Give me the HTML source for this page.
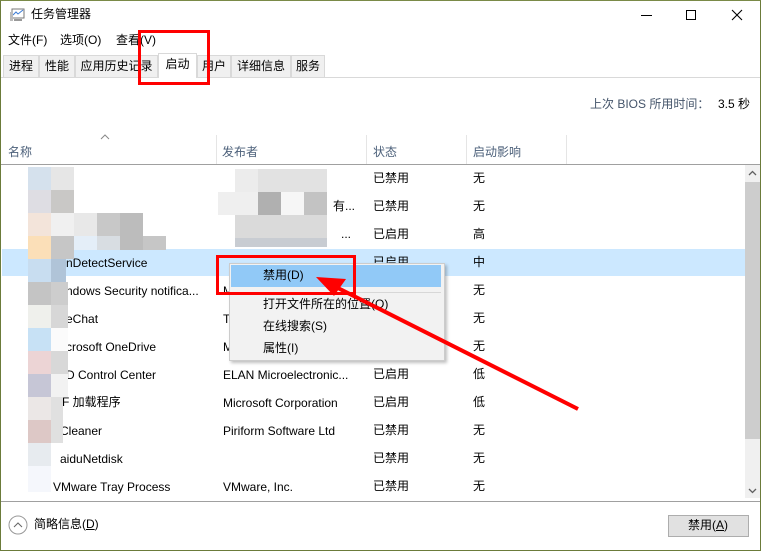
<!DOCTYPE html>
<html><head><meta charset="utf-8"><style>
*{margin:0;padding:0;box-sizing:border-box}
body{width:761px;height:551px;overflow:hidden;background:#fff;font-family:"Liberation Sans","Noto Sans CJK SC",sans-serif;font-size:12px;color:#000;position:relative}
.a{position:absolute;white-space:nowrap}
.c{position:absolute;white-space:nowrap;margin-top:-2px}
.b{position:absolute}
.tab{position:absolute;top:55px;height:22px;background:#f0f0f0;border:1px solid #d9d9d9;border-bottom:none;line-height:21px;text-align:center;font-size:12px}
</style></head><body>
<div class="b" style="left:0;top:0;width:761px;height:551px;border:1px solid #6b7b3a;border-top-color:#7a8a48"></div>
<svg class="b" style="left:9px;top:8px" width="16" height="14"><rect x="3" y="1" width="12" height="9" fill="#fff" stroke="#777"/><polyline points="4,7 7,4 9,6 14,2" fill="none" stroke="#3a7bd5"/><rect x="1" y="4" width="3" height="9" fill="#bbb"/><rect x="5" y="11" width="8" height="2" fill="#999"/></svg>
<div class="c" style="left:31px;top:7px;font-size:12px">任务管理器</div>
<div class="b" style="left:641px;top:15px;width:11px;height:1px;background:#000"></div>
<div class="b" style="left:686px;top:10px;width:10px;height:10px;border:1px solid #000"></div>
<svg class="b" style="left:731px;top:9px" width="12" height="12"><path d="M1 1L11 11M11 1L1 11" stroke="#000" stroke-width="1.1"/></svg>
<div class="c" style="left:8px;top:33px">文件(F)</div>
<div class="c" style="left:60px;top:33px">选项(O)</div>
<div class="c" style="left:116px;top:33px">查看(V)</div>
<div class="b" style="left:1px;top:77px;width:759px;height:1px;background:#d9d9d9"></div>
<div class="tab" style="left:3px;width:36px">进程</div>
<div class="tab" style="left:39px;width:36px">性能</div>
<div class="tab" style="left:75px;width:83px">应用历史记录</div>
<div class="tab" style="left:158px;width:39px;top:53px;height:25px;background:#fff">启动</div>
<div class="tab" style="left:197px;width:34px">用户</div>
<div class="tab" style="left:231px;width:60px">详细信息</div>
<div class="tab" style="left:291px;width:34px">服务</div>
<div class="b" style="left:138px;top:30px;width:72px;height:55px;border:3px solid #f00"></div>
<div class="c" style="left:590px;top:97px;color:#44546a">上次 BIOS 所用时间：</div>
<div class="c" style="left:718px;top:97px">3.5 秒</div>
<svg class="b" style="left:100px;top:134px" width="10" height="6"><path d="M1 5L5 1L9 5" fill="none" stroke="#888"/></svg>
<div class="c" style="left:8px;top:145px;color:#4c607a">名称</div>
<div class="c" style="left:222px;top:145px;color:#4c607a">发布者</div>
<div class="c" style="left:373px;top:145px;color:#4c607a">状态</div>
<div class="c" style="left:473px;top:145px;color:#4c607a">启动影响</div>
<div class="b" style="left:216px;top:135px;width:1px;height:29px;background:#e5e5e5"></div>
<div class="b" style="left:366px;top:135px;width:1px;height:29px;background:#e5e5e5"></div>
<div class="b" style="left:466px;top:135px;width:1px;height:29px;background:#e5e5e5"></div>
<div class="b" style="left:566px;top:135px;width:1px;height:29px;background:#e5e5e5"></div>
<div class="b" style="left:1px;top:164px;width:759px;height:1px;background:#a0a0a0"></div>
<div class="b" style="left:2px;top:249px;width:743px;height:27px;background:#cce8ff"></div>
<div class="c" style="left:373px;top:171px">已禁用</div><div class="c" style="left:473px;top:171px">无</div>
<div class="c" style="left:333px;top:199px">有...</div><div class="c" style="left:373px;top:199px">已禁用</div><div class="c" style="left:473px;top:199px">无</div>
<div class="a" style="left:341px;top:227px">...</div><div class="c" style="left:373px;top:227px">已启用</div><div class="c" style="left:473px;top:227px">高</div>
<div class="a" style="left:66px;top:256px">nDetectService</div><div class="c" style="left:373px;top:255px">已启用</div><div class="c" style="left:473px;top:255px">中</div>
<div class="a" style="left:66px;top:284px">ndows Security notifica...</div><div class="a" style="left:223px;top:284px">M</div><div class="c" style="left:473px;top:283px">无</div>
<div class="a" style="left:66px;top:312px">eChat</div><div class="a" style="left:223px;top:312px">T</div><div class="c" style="left:473px;top:311px">无</div>
<div class="a" style="left:66px;top:340px">crosoft OneDrive</div><div class="a" style="left:223px;top:340px">M</div><div class="c" style="left:473px;top:339px">无</div>
<div class="a" style="left:66px;top:368px">D Control Center</div><div class="a" style="left:223px;top:368px">ELAN Microelectronic...</div><div class="c" style="left:373px;top:367px">已启用</div><div class="c" style="left:473px;top:367px">低</div>
<div class="c" style="left:62px;top:395px">F 加载程序</div><div class="a" style="left:223px;top:396px">Microsoft Corporation</div><div class="c" style="left:373px;top:395px">已启用</div><div class="c" style="left:473px;top:395px">低</div>
<div class="a" style="left:60px;top:424px">Cleaner</div><div class="a" style="left:223px;top:424px">Piriform Software Ltd</div><div class="c" style="left:373px;top:423px">已禁用</div><div class="c" style="left:473px;top:423px">无</div>
<div class="a" style="left:60px;top:452px">aiduNetdisk</div><div class="c" style="left:373px;top:451px">已禁用</div><div class="c" style="left:473px;top:451px">无</div>
<div class="a" style="left:53px;top:480px">VMware Tray Process</div><div class="a" style="left:223px;top:480px">VMware, Inc.</div><div class="c" style="left:373px;top:479px">已禁用</div><div class="c" style="left:473px;top:479px">无</div>
<div class="b" style="left:28px;top:167px;width:23px;height:23px;background:#d5e1ed"></div>
<div class="b" style="left:28px;top:190px;width:23px;height:23px;background:#dedde3"></div>
<div class="b" style="left:28px;top:213px;width:23px;height:23px;background:#f3e4da"></div>
<div class="b" style="left:28px;top:236px;width:23px;height:23px;background:#fbdfb8"></div>
<div class="b" style="left:28px;top:259px;width:23px;height:23px;background:#c8ddf0"></div>
<div class="b" style="left:28px;top:282px;width:23px;height:23px;background:#c4c4c4"></div>
<div class="b" style="left:28px;top:305px;width:23px;height:23px;background:#eff0ec"></div>
<div class="b" style="left:28px;top:328px;width:23px;height:23px;background:#c7e1f5"></div>
<div class="b" style="left:28px;top:351px;width:23px;height:23px;background:#ecd4d5"></div>
<div class="b" style="left:28px;top:374px;width:23px;height:23px;background:#c6c6d6"></div>
<div class="b" style="left:28px;top:397px;width:23px;height:23px;background:#ebe7e6"></div>
<div class="b" style="left:28px;top:420px;width:23px;height:23px;background:#ddc8c6"></div>
<div class="b" style="left:28px;top:443px;width:23px;height:23px;background:#e7ebef"></div>
<div class="b" style="left:28px;top:466px;width:23px;height:26px;background:#f5f7fc"></div>
<div class="b" style="left:51px;top:167px;width:23px;height:23px;background:#e6e6e6"></div>
<div class="b" style="left:51px;top:190px;width:23px;height:23px;background:#c9c8c6"></div>
<div class="b" style="left:51px;top:213px;width:23px;height:23px;background:#f0f0f0"></div>
<div class="b" style="left:51px;top:236px;width:23px;height:23px;background:#c6c6c6"></div>
<div class="b" style="left:51px;top:259px;width:15px;height:23px;background:#b0c4d8"></div>
<div class="b" style="left:51px;top:282px;width:17px;height:23px;background:#cdcdcd"></div>
<div class="b" style="left:51px;top:305px;width:17px;height:23px;background:#d7d7d7"></div>
<div class="b" style="left:51px;top:328px;width:17px;height:23px;background:#fbfbfb"></div>
<div class="b" style="left:51px;top:351px;width:17px;height:23px;background:#d8d8d8"></div>
<div class="b" style="left:51px;top:374px;width:17px;height:23px;background:#f2f2f2"></div>
<div class="b" style="left:51px;top:397px;width:12px;height:23px;background:#e0e0e0"></div>
<div class="b" style="left:51px;top:420px;width:12px;height:23px;background:#e0e0e0"></div>
<div class="b" style="left:74px;top:213px;width:23px;height:23px;background:#e8e8e8"></div>
<div class="b" style="left:97px;top:213px;width:23px;height:23px;background:#c8c8c8"></div>
<div class="b" style="left:120px;top:213px;width:23px;height:37px;background:#bcbcbc"></div>
<div class="b" style="left:74px;top:236px;width:23px;height:14px;background:#e4eef8"></div>
<div class="b" style="left:97px;top:236px;width:23px;height:14px;background:#d8dde2"></div>
<div class="b" style="left:143px;top:236px;width:23px;height:14px;background:#c6c6c6"></div>
<div class="b" style="left:235px;top:169px;width:23px;height:23px;background:#ececec"></div>
<div class="b" style="left:258px;top:169px;width:69px;height:23px;background:#e2e2e2"></div>
<div class="b" style="left:218px;top:192px;width:40px;height:23px;background:#efefef"></div>
<div class="b" style="left:258px;top:192px;width:23px;height:23px;background:#b0b0b0"></div>
<div class="b" style="left:281px;top:192px;width:23px;height:23px;background:#f6f6f6"></div>
<div class="b" style="left:304px;top:192px;width:23px;height:23px;background:#c3c3c3"></div>
<div class="b" style="left:235px;top:215px;width:92px;height:23px;background:#dadada"></div>
<div class="b" style="left:235px;top:238px;width:92px;height:9px;background:#c8ccd2"></div>
<div class="b" style="left:745px;top:165px;width:15px;height:333px;background:#f0f0f0"></div>
<div class="b" style="left:745px;top:182px;width:15px;height:257px;background:#cdcdcd"></div>
<svg class="b" style="left:748px;top:170px" width="9" height="6"><path d="M1 5L4.5 1.5L8 5" fill="none" stroke="#606060" stroke-width="1.3"/></svg>
<svg class="b" style="left:748px;top:488px" width="9" height="6"><path d="M1 1L4.5 4.5L8 1" fill="none" stroke="#606060" stroke-width="1.3"/></svg>
<div class="b" style="left:1px;top:501px;width:759px;height:1px;background:#a0a0a0"></div>
<svg class="b" style="left:8px;top:515px" width="20" height="20"><circle cx="10" cy="10" r="9" fill="#fff" stroke="#999"/><path d="M6 12L10 8L14 12" fill="none" stroke="#666"/></svg>
<div class="c" style="left:34px;top:517px">简略信息(<u>D</u>)</div>
<div class="b" style="left:668px;top:515px;width:81px;height:22px;background:#e1e1e1;border:1px solid #adadad"></div>
<div class="c" style="left:688px;top:518px">禁用(<u>A</u>)</div>
<div class="b" style="left:229px;top:263px;width:216px;height:98px;background:#f2f2f2;border:1px solid #ccc;box-shadow:2px 2px 3px rgba(0,0,0,.25)"></div>
<div class="b" style="left:231px;top:265px;width:210px;height:22px;background:#91c9f7"></div>
<div class="c" style="left:263px;top:268px">禁用(D)</div>
<div class="b" style="left:232px;top:292px;width:209px;height:1px;background:#d7d7d7"></div>
<div class="c" style="left:263px;top:297px">打开文件所在的位置(O)</div>
<div class="c" style="left:263px;top:319px">在线搜索(S)</div>
<div class="c" style="left:263px;top:341px">属性(I)</div>
<div class="b" style="left:216px;top:255px;width:140px;height:40px;border:3px solid #f00"></div>
<svg class="b" style="left:0;top:0" width="761" height="551"><line x1="578" y1="409" x2="330" y2="284" stroke="#f00" stroke-width="4"/><path d="M316 277L346 279L334 296Z" fill="#f00"/></svg>
</body></html>
